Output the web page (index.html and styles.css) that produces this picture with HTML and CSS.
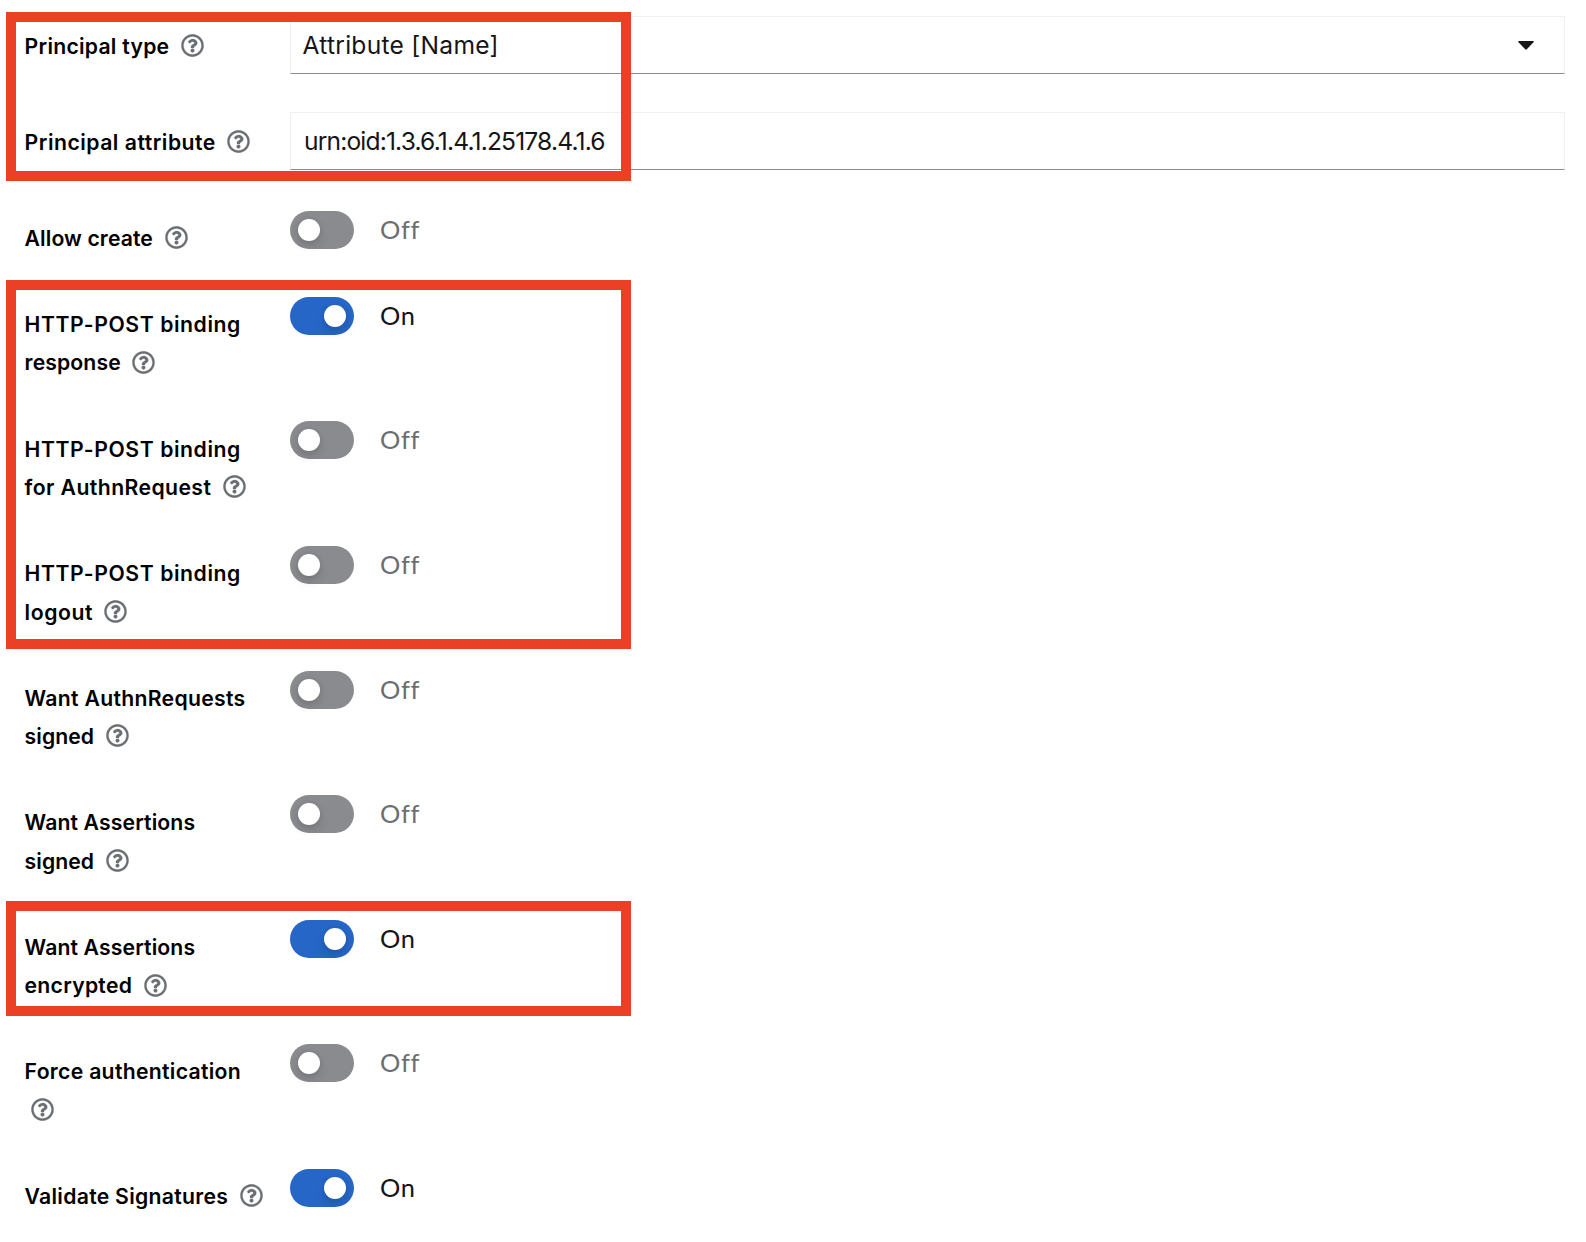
FILE: index.html
```html
<!DOCTYPE html>
<html lang="en">
<head>
<meta charset="utf-8">
<title>Identity provider settings</title>
<link rel="stylesheet" href="styles.css">
</head>
<body>
<svg class="defs" aria-hidden="true">
  <symbol id="help" viewBox="0 0 512 512"><path d="M256 8C119.043 8 8 119.083 8 256c0 136.997 111.043 248 248 248s248-111.003 248-248C504 119.083 392.957 8 256 8zm0 448c-110.532 0-200-89.431-200-200 0-110.495 89.472-200 200-200 110.491 0 200 89.471 200 200 0 110.53-89.431 200-200 200zm107.244-255.2c0 67.052-72.421 68.084-72.421 92.863V300c0 6.627-5.373 12-12 12h-45.647c-6.627 0-12-5.373-12-12v-8.659c0-35.745 27.1-50.034 47.579-61.516 17.561-9.845 28.324-16.541 28.324-29.579 0-17.246-21.999-28.693-39.784-28.693-23.189 0-33.894 10.977-48.942 29.969-4.057 5.12-11.46 6.071-16.666 2.124l-27.824-21.098c-5.107-3.872-6.251-11.066-2.644-16.363C184.846 131.491 214.94 112 261.794 112c49.071 0 101.45 38.304 101.45 88.8zM298 368c0 23.159-18.841 42-42 42s-42-18.841-42-42 18.841-42 42-42 42 18.841 42 42z"/></symbol>
</svg>
<form class="form">
  <div class="row row-field">
    <div class="label"><span class="t-type">Principal type</span> <svg class="help"><use href="#help"/></svg></div>
    <div class="field select"><span class="t-name">Attribute [Name]</span>
      <svg class="caret" viewBox="0 0 16 9"><path d="M1 0H15Q16.300 .3 15.500 1.300L8.800 8.300Q8 9 7.200 8.300L.5 1.300Q-.3 .3 1 0Z"/></svg>
    </div>
  </div>
  <div class="row row-field">
    <div class="label"><span class="t-attribute">Principal attribute</span> <svg class="help"><use href="#help"/></svg></div>
    <div class="field"><span class="t-urn">urn:oid:1.3.6.1.4.1.25178.4.1.6</span></div>
  </div>
  <div class="row">
    <div class="label"><span class="t-create">Allow create</span> <svg class="help"><use href="#help"/></svg></div>
    <div class="switch"><i class="track"></i><span class="state">Off</span></div>
  </div>
  <div class="row">
    <div class="label"><span class="t-http">HTTP-POST binding</span><br><span class="t-response">response</span> <svg class="help"><use href="#help"/></svg></div>
    <div class="switch on"><i class="track"></i><span class="state">On</span></div>
  </div>
  <div class="row">
    <div class="label"><span class="t-http">HTTP-POST binding</span><br><span class="t-for">for AuthnRequest</span> <svg class="help"><use href="#help"/></svg></div>
    <div class="switch"><i class="track"></i><span class="state">Off</span></div>
  </div>
  <div class="row">
    <div class="label"><span class="t-http">HTTP-POST binding</span><br><span class="t-logout">logout</span> <svg class="help"><use href="#help"/></svg></div>
    <div class="switch"><i class="track"></i><span class="state">Off</span></div>
  </div>
  <div class="row">
    <div class="label"><span class="t-requests">Want AuthnRequests</span><br><span class="t-signed">signed</span> <svg class="help"><use href="#help"/></svg></div>
    <div class="switch"><i class="track"></i><span class="state">Off</span></div>
  </div>
  <div class="row">
    <div class="label"><span class="t-assertions">Want Assertions</span><br><span class="t-signed">signed</span> <svg class="help"><use href="#help"/></svg></div>
    <div class="switch"><i class="track"></i><span class="state">Off</span></div>
  </div>
  <div class="row">
    <div class="label"><span class="t-assertions">Want Assertions</span><br><span class="t-encrypted">encrypted</span> <svg class="help"><use href="#help"/></svg></div>
    <div class="switch on"><i class="track"></i><span class="state">On</span></div>
  </div>
  <div class="row">
    <div class="label"><span class="t-force">Force authentication</span><br><svg class="help"><use href="#help"/></svg></div>
    <div class="switch"><i class="track"></i><span class="state">Off</span></div>
  </div>
  <div class="row">
    <div class="label"><span class="t-validate">Validate Signatures</span> <svg class="help"><use href="#help"/></svg></div>
    <div class="switch on"><i class="track"></i><span class="state">On</span></div>
  </div>
</form>
<div class="mark mark-principal"></div>
<div class="mark mark-bindings"></div>
<div class="mark mark-encrypted"></div>
</body>
</html>
```
FILE: styles.css
```css
* { box-sizing: border-box; }

body {
  position: relative;
  height: 1242px;
  margin: 0;
  overflow: hidden;
  background: #fff;
  color: #151515;
  font-family: Inter, "Liberation Sans", sans-serif;
}

.defs { display: none; }

.form {
  display: flex;
  flex-direction: column;
  gap: 37.3px;
  padding: 16px 21px 0 24.6px;
}

.row {
  display: grid;
  grid-template-columns: 265.4px 1fr;
  align-items: start;
}

.row-field { height: 58.8px; }

.label {
  padding-top: 10.6px;
  color: #000;
  font-size: 21.2px;
  font-weight: 600;
  line-height: 38.35px;
  white-space: nowrap;
}

.help {
  width: 23px;
  height: 23px;
  margin-left: 6.2px;
  vertical-align: -3.3px;
  fill: #6a6e73;
  stroke: #6a6e73;
  stroke-width: 6px;
}

.field {
  display: flex;
  align-items: center;
  justify-content: space-between;
  height: 58px;
  padding: 0 30px 0 13px;
  border: 1px solid #f0f0f0;
  border-bottom-color: #8a8d90;
  font-size: 24.6px;
  line-height: 38px;
}

.select { padding-left: 11.5px; }

.caret {
  width: 16px;
  height: 9px;
  fill: #151515;
}

.switch {
  display: flex;
  align-items: center;
  gap: 26px;
  height: 38px;
  margin-top: 2.4px;
  color: #6a6e73;
}

.track {
  display: block;
  width: 64px;
  height: 38px;
  padding: 8px;
  border-radius: 19px;
  background: #8a8b8f;
}

.track::before {
  content: "";
  display: block;
  width: 22px;
  height: 22px;
  border-radius: 50%;
  background: #fff;
  box-shadow: 0 5px 10px rgba(3, 3, 3, .13), 0 0 5px rgba(3, 3, 3, .08);
}

.on { color: #151515; }
.on .track { background: #2666c6; }
.on .track::before { margin-left: 25.6px; }

.state {
  padding-bottom: 2px;
  font-family: Lato, sans-serif;
  font-size: 25.4px;
  letter-spacing: .7px;
  line-height: 36px;
  font-variant-ligatures: none;
}

.t-type { letter-spacing: .25px; }
.t-attribute { letter-spacing: .5px; }
.t-create { letter-spacing: .1px; }
.t-http { letter-spacing: .58px; }
.t-response { letter-spacing: .1px; }
.t-for { letter-spacing: .41px; }
.t-logout { letter-spacing: .55px; }
.t-requests { letter-spacing: .29px; }
.t-signed { letter-spacing: .05px; }
.t-assertions { letter-spacing: .12px; }
.t-encrypted { letter-spacing: .25px; }
.t-force { letter-spacing: .29px; }
.t-validate { letter-spacing: .28px; }
.t-name { letter-spacing: .26px; }
.t-urn { letter-spacing: -.84px; }

.mark {
  position: absolute;
  left: 6px;
  width: 625px;
  border: 10px solid #ec4026;
}

.mark-principal { top: 12px; height: 169px; }
.mark-bindings { top: 280px; height: 369px; }
.mark-encrypted { top: 901px; height: 115px; }
```
